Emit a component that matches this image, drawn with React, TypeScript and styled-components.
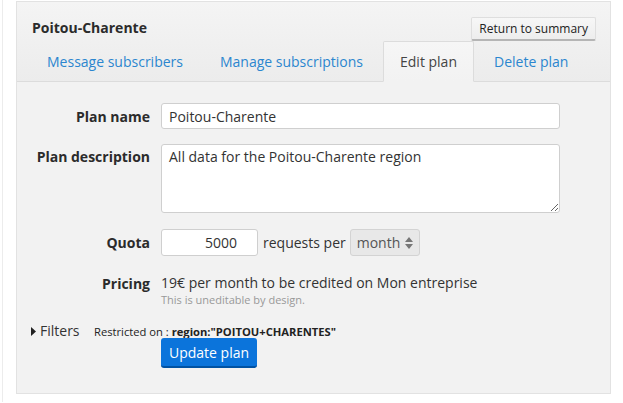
import styled, { createGlobalStyle } from 'styled-components';

const GlobalStyle = createGlobalStyle`
  html, body {
    margin: 0;
    padding: 0;
    background: #ffffff;
  }
  body {
    font-family: 'Open Sans', 'Liberation Sans', sans-serif;
    color: #333;
  }
`;

const tabs = ['Message subscribers', 'Manage subscriptions', 'Edit plan', 'Delete plan'];

export default function App() {
  return (
    <>
      <GlobalStyle />
      <Page>
        <Panel>
          <Header>
            <TitleRow>
              <Title>Poitou-Charente</Title>
              <SmallButton>Return to summary</SmallButton>
            </TitleRow>
            <Tabs>
              {tabs.map((t) => (
                <Tab key={t} $active={t === 'Edit plan'}>
                  {t}
                </Tab>
              ))}
            </Tabs>
          </Header>

          <Body>
            <Form>
              <Label>Plan name</Label>
              <TextInput defaultValue="Poitou-Charente" />

              <Label $top>Plan description</Label>
              <TextArea defaultValue="All data for the Poitou-Charente region" />

              <Label>Quota</Label>
              <QuotaRow>
                <QuotaInput defaultValue="5000" />
                <span>requests per</span>
                <Select>
                  month
                  <svg width="8" height="12" viewBox="0 0 8 12">
                    <path d="M4 0 L8 5 L0 5 Z M0 7 L8 7 L4 12 Z" fill="#777" />
                  </svg>
                </Select>
              </QuotaRow>

              <Label $top>Pricing</Label>
              <Pricing>
                <span>19€ per month to be credited on Mon entreprise</span>
                <Hint>This is uneditable by design.</Hint>
              </Pricing>
            </Form>

            <Filters>
              <Summary>
                <svg width="5" height="9" viewBox="0 0 5 9">
                  <path d="M0 0 L5 4.5 L0 9 Z" fill="#222" />
                </svg>
                Filters
              </Summary>
              <Restriction>
                Restricted on : <b>region:"POITOU+CHARENTES"</b>
              </Restriction>
            </Filters>

            <Actions>
              <PrimaryButton>Update plan</PrimaryButton>
            </Actions>
          </Body>
        </Panel>
      </Page>
    </>
  );
}

const Page = styled.div`
  margin-left: 2px;
  border-left: 1px solid #ececec;
  padding: 1px 12px 8px 13px;
  width: 595px;
`;

const Panel = styled.div`
  border: 1px solid #e2e2e2;
  background: #f2f2f2;
  height: 393px;
  box-sizing: border-box;
`;

const Header = styled.div`
  padding: 14px 14px 0 13px;
  background: linear-gradient(#f4f4f4, #ececec);
  border-bottom: 1px solid #dcdcdc;
`;

const TitleRow = styled.div`
  display: flex;
  justify-content: space-between;
  align-items: flex-start;
  height: 25px;
  padding-left: 2px;
`;

const Title = styled.h2`
  margin: 2px 0 0;
  font-size: 14px;
  font-weight: 700;
  line-height: 19px;
  color: #2b2b2b;
`;

const SmallButton = styled.button`
  font-family: inherit;
  font-size: 12px;
  color: #222;
  height: 24px;
  padding: 0 7px;
  background: linear-gradient(#f7f7f7, #ededed);
  border: 1px solid #dedede;
  border-bottom: 2px solid #b5b5b5;
  border-radius: 2px;
  margin-top: 1px;
`;

const Tabs = styled.div`
  display: flex;
  height: 41px;
  margin-bottom: -1px;
`;

const Tab = styled.div<{ $active?: boolean }>`
  display: flex;
  align-items: center;
  flex-shrink: 0;
  white-space: nowrap;
  padding: 0 16px;
  margin-right: 3px;
  font-size: 14px;
  box-sizing: border-box;
  color: ${(p) => (p.$active ? '#444' : '#2b86cf')};
  border: 1px solid ${(p) => (p.$active ? '#dcdcdc' : 'transparent')};
  border-bottom: 1px solid ${(p) => (p.$active ? '#f2f2f2' : 'transparent')};
  border-radius: 2px 2px 0 0;
  background: ${(p) => (p.$active ? 'linear-gradient(#f6f6f6, #f2f2f2)' : 'transparent')};
`;

const Body = styled.div`
  padding: 21px 0 0 0;
`;

const Form = styled.div`
  display: grid;
  grid-template-columns: 133px 399px;
  column-gap: 11px;
  row-gap: 15px;
  align-items: center;
`;

const Label = styled.label<{ $top?: boolean }>`
  text-align: right;
  font-size: 14px;
  font-weight: 700;
  color: #2b2b2b;
  align-self: ${(p) => (p.$top ? 'start' : 'center')};
  margin-top: ${(p) => (p.$top ? '3px' : '0')};
`;

const fieldBase = `
  font-family: 'Open Sans', 'Liberation Sans', sans-serif;
  font-size: 14px;
  color: #333;
  background: #fff;
  border: 1px solid #cfcfcf;
  border-radius: 3px;
  box-sizing: border-box;
  outline: none;
`;

const TextInput = styled.input`
  ${fieldBase}
  height: 26px;
  width: 399px;
  padding: 0 7px;
`;

const TextArea = styled.textarea`
  ${fieldBase}
  height: 69px;
  width: 399px;
  padding: 2px 7px;
  margin-top: 0;
  resize: vertical;
`;

const QuotaRow = styled.div`
  display: flex;
  align-items: center;
  gap: 5px;
  font-size: 14px;
  color: #333;
  margin-top: 1px;
`;

const QuotaInput = styled.input`
  ${fieldBase}
  height: 27px;
  width: 97px;
  padding: 0 20px 0 7px;
  text-align: right;
`;

const Select = styled.div`
  display: flex;
  align-items: center;
  gap: 5px;
  height: 27px;
  box-sizing: border-box;
  padding: 0 6px 0 6px;
  margin-left: -1px;
  font-size: 14px;
  color: #555;
  background: #e8e8e8;
  border: 1px solid #d3d3d3;
  border-radius: 3px;
`;

const Pricing = styled.div`
  display: flex;
  flex-direction: column;
  font-size: 14px;
  color: #333;
  line-height: 19px;
  margin-top: 2px;
`;

const Hint = styled.span`
  font-size: 11px;
  line-height: 15px;
  color: #999;
`;

const Filters = styled.div`
  display: flex;
  align-items: baseline;
  margin: 14px 0 0 14px;
  height: 17px;
`;

const Summary = styled.div`
  display: flex;
  align-items: center;
  gap: 4px;
  font-size: 14px;
  color: #333;
  width: 63px;
  svg {
    margin-top: 1px;
  }
`;

const Restriction = styled.span`
  font-size: 11.2px;
  color: #222;
  b {
    font-weight: 700;
  }
`;

const Actions = styled.div`
  padding-left: 144px;
`;

const PrimaryButton = styled.button`
  font-family: inherit;
  font-size: 14px;
  color: #fff;
  height: 30px;
  padding: 0 8px;
  background: #0b74db;
  border: none;
  border-bottom: 2px solid #0052a3;
  border-radius: 3px;
`;
